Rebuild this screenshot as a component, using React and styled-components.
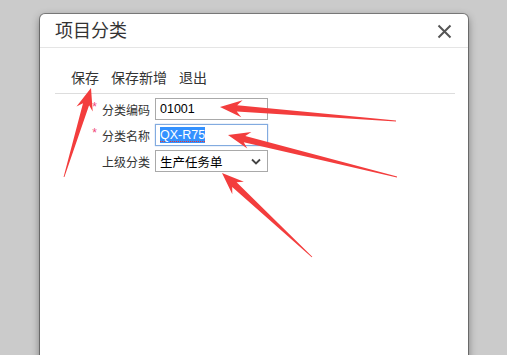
import React from "react"
import styled, { createGlobalStyle } from "styled-components"

const GlobalStyle = createGlobalStyle`
  html, body {
    margin: 0;
    padding: 0;
    background: #cbcbcb;
    font-family: "Liberation Sans", "Noto Sans CJK SC", sans-serif;
    color: #333;
  }
`

const Page = styled.div`
  position: relative;
  width: 507px;
  height: 355px;
  overflow: hidden;
  padding: 14px 0 0 40px;
  box-sizing: border-box;
`

const Dialog = styled.div`
  width: 428px;
  height: 360px;
  background: #fff;
  border-radius: 5px 5px 0 0;
  box-shadow: 0 0 0 1px rgba(0, 0, 0, 0.35), 0 3px 9px rgba(0, 0, 0, 0.45);
`

const Header = styled.div`
  display: flex;
  align-items: center;
  justify-content: space-between;
  height: 33px;
  padding: 0 16px 0 15px;
  border-bottom: 1px solid #e5e5e5;
`

const Title = styled.h4`
  margin: 0;
  font-size: 18px;
  font-weight: normal;
  line-height: 20px;
  color: #333;
`

const Close = styled.span`
  display: flex;
  width: 15px;
  height: 15px;
  margin-top: 1px;
`

const Body = styled.div`
  padding: 0 13px 0 15px;
`

const Toolbar = styled.div`
  display: flex;
  gap: 12px;
  padding: 15px 0 0 16px;
  height: 30px;
  align-items: center;
  border-bottom: 1px solid #ddd;
`

const ToolButton = styled.span`
  font-size: 14px;
  line-height: 20px;
  color: #333;
`

const Form = styled.div`
  display: grid;
  grid-template-columns: 100px 113px;
  row-gap: 4px;
  padding-top: 4px;
`

const Label = styled.label`
  display: flex;
  align-items: center;
  justify-content: flex-end;
  padding-right: 5px;
  font-size: 12px;
  color: #333;
  height: 22px;
`

const Star = styled.span`
  color: #f0487a;
  font-size: 12px;
  margin-right: 5px;
  position: relative;
  top: -2px;
`

const Field = styled.div`
  display: flex;
  align-items: center;
  justify-content: space-between;
  height: 22px;
  box-sizing: border-box;
  padding: 0 6px 0 4px;
  border: 1px solid ${(p) => (p.$focused ? "#82abe0" : "#a9a9a9")};
  box-shadow: ${(p) => (p.$focused ? "0 0 1px #82abe0" : "none")};
  font-size: 12.5px;
  color: #000;
  background: #fff;
`

const Selected = styled.span`
  background: #3391ff;
  color: #fff;
  padding: 1px 0;
  text-decoration: underline dotted #e33;
  text-decoration-thickness: 1px;
  text-underline-offset: 2px;
`

const Arrows = styled.svg`
  position: absolute;
  left: 0;
  top: 0;
  pointer-events: none;
`

const arrows = [
  { tail: [64, 177], tip: [91, 88] },
  { tail: [396, 121], tip: [220, 107] },
  { tail: [397, 177], tip: [228, 135] },
  { tail: [312, 257], tip: [222, 173] },
]

function arrowPoints({ tail, tip }) {
  const dx = tip[0] - tail[0]
  const dy = tip[1] - tail[1]
  const len = Math.hypot(dx, dy)
  const ux = dx / len
  const uy = dy / len
  const nx = -uy
  const ny = ux
  const at = (along, side) => [
    tip[0] - ux * along + nx * side,
    tip[1] - uy * along + ny * side,
  ]
  const pts = [
    [tail[0] + nx * 0.4, tail[1] + ny * 0.4],
    at(17, 3.2),
    at(22, 8.5),
    tip,
    at(22, -8.5),
    at(17, -3.2),
    [tail[0] - nx * 0.4, tail[1] - ny * 0.4],
  ]
  return pts.map((p) => p.map((v) => v.toFixed(1)).join(",")).join(" ")
}

const App = () => (
  <Page>
    <GlobalStyle />
    <Dialog>
      <Header>
        <Title>项目分类</Title>
        <Close>
          <svg width="15" height="15" viewBox="0 0 15 15">
            <path d="M1.5 1.5 L13.5 13.5 M13.5 1.5 L1.5 13.5" stroke="#555" strokeWidth="2" />
          </svg>
        </Close>
      </Header>
      <Body>
        <Toolbar>
          <ToolButton>保存</ToolButton>
          <ToolButton>保存新增</ToolButton>
          <ToolButton>退出</ToolButton>
        </Toolbar>
        <Form>
          <Label>
            <Star>*</Star>分类编码
          </Label>
          <Field>01001</Field>
          <Label>
            <Star>*</Star>分类名称
          </Label>
          <Field $focused>
            <Selected>QX-R75</Selected>
          </Field>
          <Label>上级分类</Label>
          <Field>
            <span>生产任务单</span>
            <svg width="10" height="7" viewBox="0 0 10 7">
              <path d="M1 1.5 L5 5.5 L9 1.5" fill="none" stroke="#444" strokeWidth="1.8" />
            </svg>
          </Field>
        </Form>
      </Body>
    </Dialog>
    <Arrows width="507" height="355">
      {arrows.map((a, i) => (
        <polygon key={i} points={arrowPoints(a)} fill="#f33d3d" />
      ))}
    </Arrows>
  </Page>
)

export default App
